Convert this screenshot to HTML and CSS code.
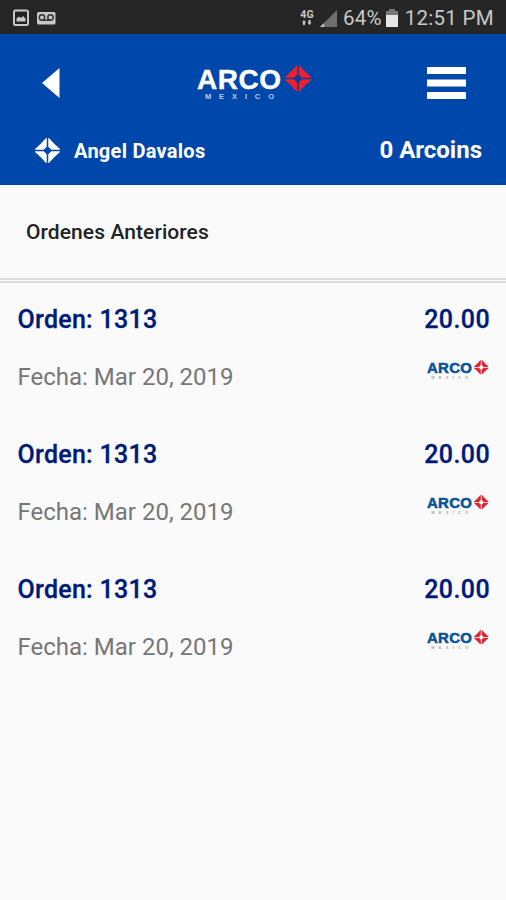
FILE: index.html
```html
<!DOCTYPE html>
<html lang="es">
<head>
<meta charset="utf-8">
<title>Ordenes Anteriores</title>
<link rel="stylesheet" href="styles.css">
</head>
<body>
<svg class="defs" width="0" height="0" aria-hidden="true">
  <symbol id="spark" viewBox="0 0 26 26">
    <path d="M12.200 0V9L10.600 10.600 9 12.200H0V11.500L6 6 11.500 0ZM13.800 0V9L15.400 10.600 17 12.200H26V11.500L20 6 14.500 0ZM12.200 26V17L10.600 15.400 9 13.800H0V14.500L6 20 11.500 26ZM13.800 26V17L15.400 15.400 17 13.800H26V14.500L20 20 14.500 26Z"/>
  </symbol>
</svg>
<div class="status">
  <svg class="notices" width="46" height="20" viewBox="0 0 46 20">
    <rect x="2" y="2.500" width="14" height="14.500" rx="1.500" fill="#222" stroke="#c8c8c8" stroke-width="2"/>
    <path d="M4.500 13.500V10.500L7 8.500 9 10 11 8 13.500 10.500V13.500Z" fill="#c8c8c8"/>
    <rect x="25" y="4" width="18.500" height="12.500" rx="1.500" fill="#c8c8c8"/>
    <g fill="none" stroke="#333" stroke-width="1.500"><circle cx="30" cy="9.500" r="2.700"/><circle cx="38.500" cy="9.500" r="2.700"/><path d="M30 12.200H38.500"/></g>
  </svg>
  <div class="system">
    <span class="network"><b>4G</b><svg width="10" height="6" viewBox="0 0 10 6"><path d="M0 2.500 2 0 4 2.500H3V5H1V2.500ZM5.500 2.500H6.500V0H8.500V2.500H9.500L7.500 5Z" fill="#c8c8c8"/></svg></span>
    <svg class="signal" width="18" height="18" viewBox="0 0 18 18"><path d="M0 18 17 1V18Z" fill="#6e6e6e"/><path d="M0 18 4 14V18Z" fill="#c8c8c8"/></svg>
    <span class="percent">64%</span>
    <svg class="battery" width="12" height="18" viewBox="0 0 12 18"><path d="M3 0H9V2H12V6H0V2H3Z" fill="#777"/><path d="M0 6H12V18H0Z" fill="#e6e6e6"/></svg>
    <span class="clock">12:51 PM</span>
  </div>
</div>
<header class="header">
  <div class="nav">
    <svg class="back" width="18" height="30" viewBox="0 0 18 30"><path d="M0 15 17.500 0V30Z" fill="#fff"/></svg>
    <svg class="brand" width="116" height="36" viewBox="0 0 116 36">
      <text x="0" y="24" class="arco" textLength="84">ARCO</text>
      <text x="8" y="33.500" class="mexico" textLength="69">MEXICO</text>
      <rect x="92" y="4.500" width="18" height="18" rx="2" transform="rotate(45 101 13.500)" fill="#103a98"/>
      <use href="#spark" x="88" y="0" width="26" height="27" fill="#ee202d"/>
    </svg>
    <svg class="menu" width="39" height="32" viewBox="0 0 39 32"><path d="M0 0H39V7H0ZM0 12.500H39V19.500H0ZM0 25H39V32H0Z" fill="#fff"/></svg>
  </div>
  <div class="account">
    <svg class="star" width="25" height="25"><use href="#spark" width="25" height="25" fill="#fff"/></svg>
    <span class="name">Angel Davalos</span>
    <span class="coins">0 Arcoins</span>
  </div>
</header>
<h1 class="title">Ordenes Anteriores</h1>
<main>
  <section class="order">
    <div class="line"><span class="number">Orden: 1313</span><span class="amount">20.00</span></div>
    <div class="line"><span class="date">Fecha: Mar 20, 2019</span>
      <svg class="mini" width="62" height="20" viewBox="0 0 116 37"><text x="0" y="25" class="arco" textLength="84">ARCO</text><text x="8" y="35" class="mexico" textLength="69">MEXICO</text><use href="#spark" x="88" y="0" width="27" height="27" fill="#df2637"/></svg></div>
  </section>
  <section class="order">
    <div class="line"><span class="number">Orden: 1313</span><span class="amount">20.00</span></div>
    <div class="line"><span class="date">Fecha: Mar 20, 2019</span>
      <svg class="mini" width="62" height="20" viewBox="0 0 116 37"><text x="0" y="25" class="arco" textLength="84">ARCO</text><text x="8" y="35" class="mexico" textLength="69">MEXICO</text><use href="#spark" x="88" y="0" width="27" height="27" fill="#df2637"/></svg></div>
  </section>
  <section class="order">
    <div class="line"><span class="number">Orden: 1313</span><span class="amount">20.00</span></div>
    <div class="line"><span class="date">Fecha: Mar 20, 2019</span>
      <svg class="mini" width="62" height="20" viewBox="0 0 116 37"><text x="0" y="25" class="arco" textLength="84">ARCO</text><text x="8" y="35" class="mexico" textLength="69">MEXICO</text><use href="#spark" x="88" y="0" width="27" height="27" fill="#df2637"/></svg></div>
  </section>
</main>
</body>
</html>
```
FILE: styles.css
```css
* { box-sizing: border-box; }
body {
  margin: 0;
  height: 900px;
  background: #fafafa;
  font-family: Roboto, "Liberation Sans", sans-serif;
  overflow: hidden;
}
svg { display: block; flex: none; }
.defs { position: absolute; }
.status {
  height: 34px;
  padding: 1px 12px 0 12px;
  display: flex;
  align-items: center;
  justify-content: space-between;
  background: #262626;
  color: #c8c8c8;
}
.system { display: flex; align-items: center; white-space: nowrap; }
.network { width: 14px; margin-right: 6px; display: flex; flex-direction: column; align-items: center; }
.network b { font-size: 10.500px; line-height: 10px; }
.signal { margin-right: 5px; }
.percent { font-size: 20.500px; letter-spacing: .2px; margin-right: 4px; }
.battery { margin-right: 7px; }
.clock { font-size: 20.500px; letter-spacing: .3px; }
.header { height: 151px; background: #0047ab; color: #fff; }
.nav { height: 98px; padding: 0 40px 0 42px; display: flex; align-items: center; }
.brand { margin-left: 137px; }
.menu { margin-left: auto; }
.arco { font: bold 28px "Liberation Sans", sans-serif; fill: #fff; stroke: #fff; stroke-width: .4px; }
.mexico { font: bold 7.500px "Liberation Sans", sans-serif; fill: #b4cdf0; }
.account { height: 36px; padding: 0 24px 0 35px; display: flex; align-items: center; }
.name { margin: 2px 0 0 14px; font-size: 20px; font-weight: 700; letter-spacing: .27px; }
.coins { margin-left: auto; font-size: 24px; font-weight: 700; }
.title {
  height: 98px;
  margin: 0;
  padding: 1px 26px 0;
  display: flex;
  align-items: center;
  font-size: 21px;
  font-weight: 500;
  letter-spacing: .08px;
  color: #222;
  border-bottom: 5px double #dcdcdc;
}
.order { height: 135px; padding: 18px 16px 0 17.500px; }
.line { height: 36px; display: flex; justify-content: space-between; align-items: center; }
.line + .line { margin-top: 22px; }
.number, .amount { font-size: 25px; font-weight: 500; color: #001a78; -webkit-text-stroke: .3px #001a78; }
.number { letter-spacing: .28px; }
.amount { letter-spacing: .4px; }
.date { font-size: 24px; color: #777; }
.mini { margin: -15px 1.500px 0 0; }
.mini .arco { fill: #07539b; stroke: #07539b; stroke-width: 1px; }
.mini .mexico { fill: #a8a8a8; }
```
